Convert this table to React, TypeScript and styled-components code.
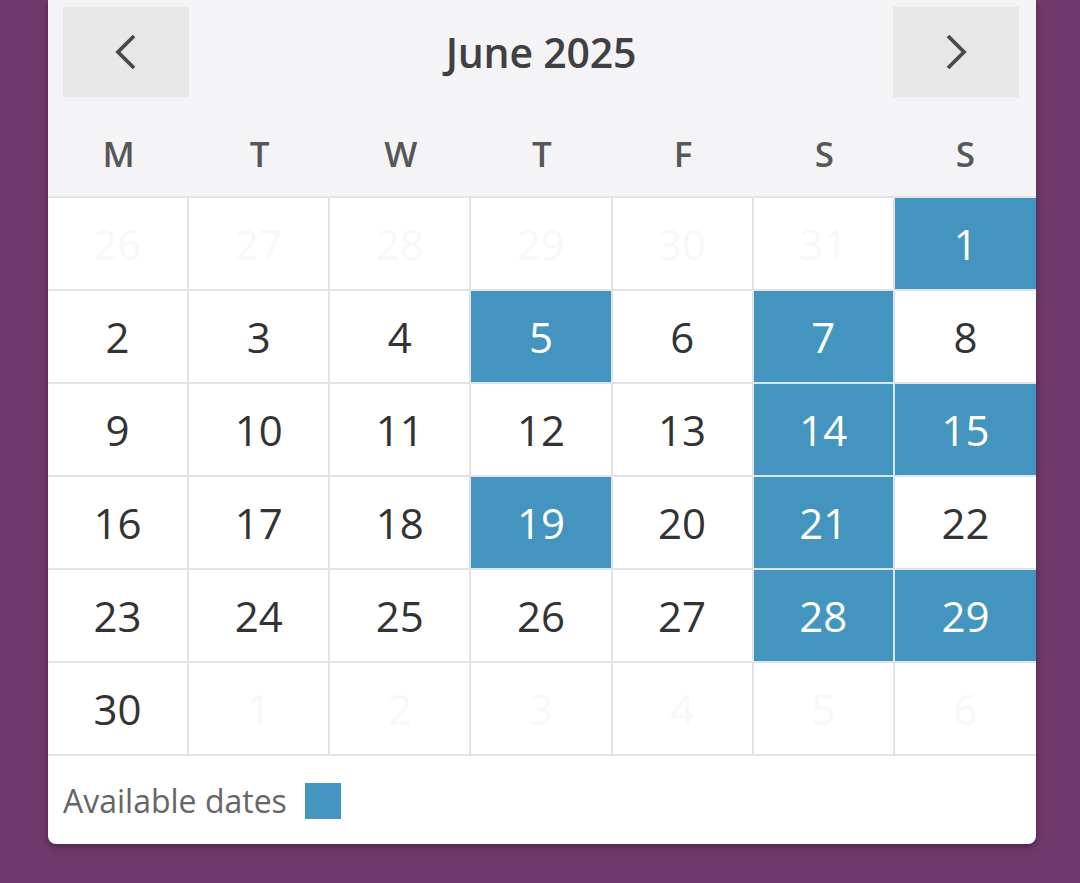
import { memo } from "react";
import styled, { createGlobalStyle } from "styled-components";

const GlobalStyle = createGlobalStyle`
	html, body {
		margin: 0;
		padding: 0;
		background: #6e3a6b;
		font-family: "Open Sans", "Noto Sans", sans-serif;
	}
`

const Page = styled.div`
	padding: 0 44px 0 48px;
	height: 883px;
	overflow: hidden;
	box-sizing: border-box;
`

const Card = styled.div`
	background: #fff;
	border-radius: 0 0 8px 8px;
	box-shadow: 0 3px 6px rgba(40, 10, 40, 0.45);
	overflow: hidden;
`

const Head = styled.div`
	background: #f4f4f7;
	padding: 7px 17px 0 15px;
`

const NavRow = styled.div`
	display: flex;
	align-items: center;
	justify-content: space-between;
	height: 90px;
`

const NavButton = styled.button`
	width: 126px;
	height: 90px;
	border: none;
	padding: 0;
	background: #e7e7e7;
	display: flex;
	align-items: center;
	justify-content: center;
	cursor: pointer;
`

const Title = styled.div`
	font-size: 41px;
	font-weight: 600;
	color: #404042;
	letter-spacing: -0.2px;
`

const DayNames = styled.div`
	display: grid;
	grid-template-columns: repeat(7, 1fr);
	margin: 0 -17px 0 -15px;
	height: 99px;
`

const DayName = styled.div`
	display: flex;
	align-items: center;
	justify-content: center;
	padding-top: 14px;
	font-size: 35px;
	font-weight: 600;
	color: #575757;
`

const Grid = styled.div`
	display: grid;
	grid-template-columns: repeat(7, 1fr);
	border-top: 2px solid #e3e3e3;
`

const Cell = styled.div<{ $avail?: boolean; $other?: boolean; $last?: boolean }>`
	height: 91px;
	display: flex;
	align-items: center;
	justify-content: center;
	font-size: 42px;
	color: ${p => (p.$avail ? "#fff" : p.$other ? "#f8f8f8" : "#333")};
	background: ${p => (p.$avail ? "#4395bf" : "#fff")};
	border-bottom: 2px solid ${p => (p.$avail ? "#d7e7ef" : "#e3e3e3")};
	border-right: ${p => (p.$last ? "none" : `2px solid ${p.$avail ? "#d7e7ef" : "#e3e3e3"}`)};
`

const Legend = styled.div`
	display: flex;
	align-items: center;
	gap: 18px;
	height: 88px;
	padding-left: 15px;
	font-size: 32px;
	color: #666;
`

const Swatch = styled.span`
	width: 36px;
	height: 36px;
	background: #4395bf;
	margin-top: 2px;
`

const Chevron = ({ dir }: { dir: "left" | "right" }) => (
	<svg width="24" height="36" viewBox="0 0 24 36">
		<polyline
			points={dir === "left" ? "20,2 4,18 20,34" : "4,2 20,18 4,34"}
			fill="none"
			stroke="#4a4a4a"
			strokeWidth="3.8"
		/>
	</svg>
)

const days = ["M", "T", "W", "T", "F", "S", "S"]
const available = [1, 5, 7, 14, 15, 19, 21, 28, 29]

const cells: { n: number; other: boolean }[] = [
	...[26, 27, 28, 29, 30, 31].map(n => ({ n, other: true })),
	...Array.from({ length: 30 }, (_, i) => ({ n: i + 1, other: false })),
	...[1, 2, 3, 4, 5, 6].map(n => ({ n, other: true })),
]

export const Calendar = memo(() => {
	return (
		<Card>
			<Head>
				<NavRow>
					<NavButton aria-label="Previous month"><Chevron dir="left" /></NavButton>
					<Title>June 2025</Title>
					<NavButton aria-label="Next month"><Chevron dir="right" /></NavButton>
				</NavRow>
				<DayNames>
					{days.map((d, i) => <DayName key={i}>{d}</DayName>)}
				</DayNames>
			</Head>
			<Grid>
				{cells.map((c, i) => (
					<Cell
						key={i}
						$other={c.other}
						$avail={!c.other && available.includes(c.n)}
						$last={i % 7 === 6}
					>
						{c.n}
					</Cell>
				))}
			</Grid>
			<Legend>
				Available dates
				<Swatch />
			</Legend>
		</Card>
	);
});

export default function App() {
	return (
		<>
			<GlobalStyle />
			<Page>
				<Calendar />
			</Page>
		</>
	);
}
